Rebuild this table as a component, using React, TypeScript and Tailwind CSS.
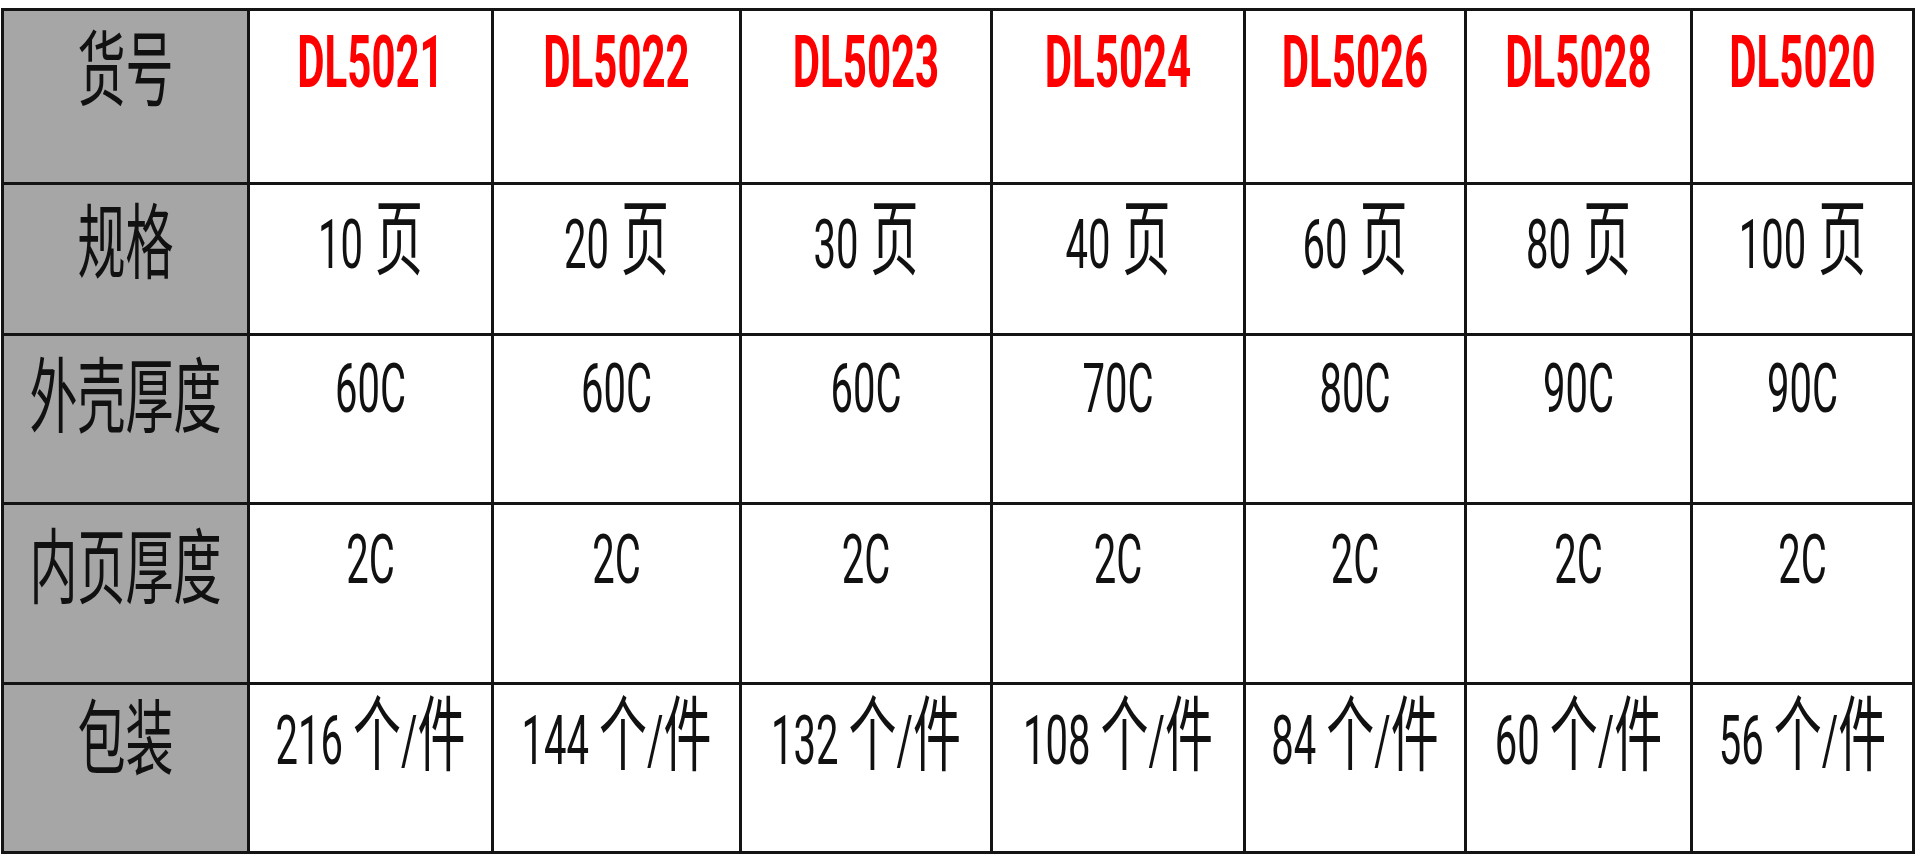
const cols = [246, 244, 248, 251, 253, 221, 226, 222];

const codes = ["DL5021", "DL5022", "DL5023", "DL5024", "DL5026", "DL5028", "DL5020"];
const pages = ["10", "20", "30", "40", "60", "80", "100"];
const shell = ["60C", "60C", "60C", "70C", "80C", "90C", "90C"];
const inner = ["2C", "2C", "2C", "2C", "2C", "2C", "2C"];
const packs = ["216", "144", "132", "108", "84", "60", "56"];

const rowBox = ["h-[104px]", "h-[101px]", "h-[107px]", "h-[111px]", "h-[94px]"];
const rowH = ["h-[174px]", "h-[151px]", "h-[169px]", "h-[180px]", "h-[169px]"];

const latin = "font-['Roboto','Noto_Sans_CJK_SC',sans-serif]";
const cjk = "font-['Noto_Sans_CJK_SC','Noto_Sans',sans-serif]";

function Cell({ row, col, children, head }: { row: number; col: number; children: React.ReactNode; head?: boolean }) {
  return (
    <div
      className={`${rowH[row]} border-r-[3px] border-b-[3px] border-[#141414] ${head ? "bg-[#a6a6a6]" : "bg-white"}`}
      style={{ width: cols[col] }}
    >
      <div className={`${rowBox[row]} flex items-center justify-center`}>
        <div className="flex items-baseline whitespace-nowrap leading-none text-[#111] scale-y-[1.7]">{children}</div>
      </div>
    </div>
  );
}

function Num({ v }: { v: string }) {
  return <span className={`${latin} text-[40px]`}>{v}</span>;
}

function Han({ v, className = "" }: { v: string; className?: string }) {
  return <span className={`${cjk} text-[48px] font-normal ${className}`}>{v}</span>;
}

export default function App() {
  const rows: { head: string; cells: React.ReactNode[] }[] = [
    {
      head: "货号",
      cells: codes.map((c) => (
        <span key={c} className={`${latin} text-[42px] font-bold text-[#ff0000]`}>
          {c}
        </span>
      )),
    },
    {
      head: "规格",
      cells: pages.map((p) => (
        <>
          <Num v={p} />
          <Han v="页" className="ml-[12px]" />
        </>
      )),
    },
    { head: "外壳厚度", cells: shell.map((s) => <Num v={s} />) },
    { head: "内页厚度", cells: inner.map((s) => <Num v={s} />) },
    {
      head: "包装",
      cells: packs.map((p) => (
        <>
          <Num v={p} />
          <Han v="个" className="ml-[10px]" />
          <Num v="/" />
          <Han v="件" />
        </>
      )),
    },
  ];

  return (
    <div className="min-h-screen w-[1920px] bg-white pt-[8px] pl-[1px]">
      <div className="inline-flex flex-col border-l-[3px] border-t-[3px] border-[#141414]">
        {rows.map((r, ri) => (
          <div key={r.head} className="flex">
            <Cell row={ri} col={0} head>
              <Han v={r.head} />
            </Cell>
            {r.cells.map((c, ci) => (
              <Cell key={ci} row={ri} col={ci + 1}>
                {c}
              </Cell>
            ))}
          </div>
        ))}
      </div>
    </div>
  );
}
